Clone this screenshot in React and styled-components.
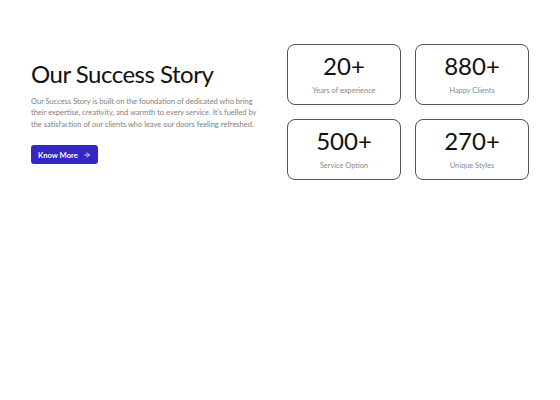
import React from 'react';
import styled, { createGlobalStyle } from 'styled-components';

const GlobalStyle = createGlobalStyle`
  body {
    margin: 0;
    background: #ffffff;
    font-family: Lato, "Liberation Sans", sans-serif;
  }
`;

const Section = styled.section`
  display: grid;
  grid-template-columns: 1fr 241px;
  gap: 26px;
  align-items: center;
  padding: 44px 32px 0 31px;
`;

const Intro = styled.div`
  display: flex;
  flex-direction: column;
  align-items: flex-start;
`;

const Title = styled.h1`
  margin: 0;
  font-size: 24px;
  line-height: 28px;
  font-weight: 400;
  letter-spacing: -0.5px;
  color: #111111;
`;

const Text = styled.p`
  margin: 8px 0 0;
  font-size: 7.5px;
  line-height: 11.5px;
  color: #808080;
  white-space: nowrap;
`;

const Button = styled.button`
  display: flex;
  align-items: center;
  gap: 5px;
  margin-top: 15px;
  height: 19px;
  padding: 0 7px;
  border: none;
  border-radius: 3px;
  background: #3526c7;
  color: #ffffff;
  font-family: inherit;
  font-size: 7.6px;
  font-weight: 700;
  cursor: pointer;
`;

const Stats = styled.div`
  display: grid;
  grid-template-columns: repeat(2, 114px);
  gap: 14px;
`;

const Card = styled.div`
  height: 61px;
  box-sizing: border-box;
  border: 1px solid #555555;
  border-radius: 8px;
  display: flex;
  flex-direction: column;
  align-items: center;
  justify-content: center;
`;

const Number = styled.div`
  font-size: 24px;
  line-height: 26px;
  color: #111111;
  margin-top: -2px;
`;

const Label = styled.div`
  margin-top: 7px;
  font-size: 7.4px;
  color: #888888;
`;

const stats = [
  { value: '20+', label: 'Years of experience' },
  { value: '880+', label: 'Happy Clients' },
  { value: '500+', label: 'Service Option' },
  { value: '270+', label: 'Unique Styles' },
];

const App = () => (
  <>
    <GlobalStyle />
    <Section>
      <Intro>
        <Title>Our Success Story</Title>
        <Text>
          Our Success Story is built on the foundation of dedicated who bring
          <br />
          their expertise, creativity, and warmth to every service. It's fuelled by
          <br />
          the satisfaction of our clients who leave our doors feeling refreshed.
        </Text>
        <Button>
          Know More
          <svg width="8" height="8" viewBox="0 0 24 24" fill="none" stroke="currentColor" strokeWidth="2.5" strokeLinecap="round" strokeLinejoin="round">
            <path d="M5 12h14" />
            <path d="M12 5l7 7-7 7" />
          </svg>
        </Button>
      </Intro>
      <Stats>
        {stats.map((s) => (
          <Card key={s.label}>
            <Number>{s.value}</Number>
            <Label>{s.label}</Label>
          </Card>
        ))}
      </Stats>
    </Section>
  </>
);

export default App;
